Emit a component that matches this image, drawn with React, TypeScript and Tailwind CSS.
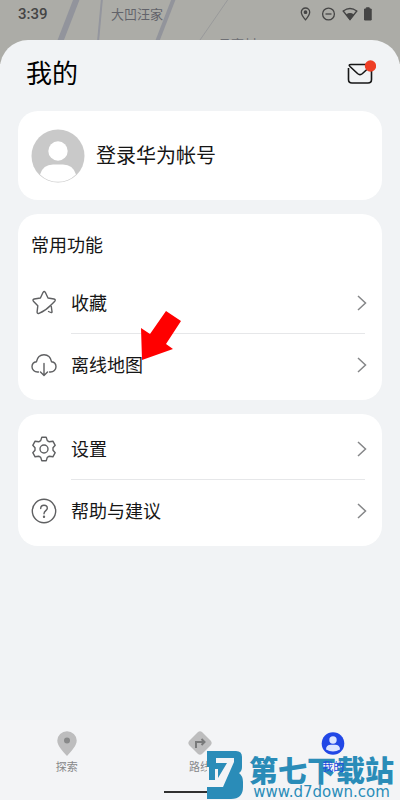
import React from "react";

const rowsCommon = [
  { label: "收藏", icon: "star" },
  { label: "离线地图", icon: "cloud" },
];

const rowsMore = [
  { label: "设置", icon: "gear" },
  { label: "帮助与建议", icon: "help" },
];

const RowIcon = ({ name }: { name: string }) => (
  <svg
    viewBox="0 0 26 26"
    className="size-[26px] shrink-0"
    fill="none"
    stroke="#5f6062"
    strokeWidth="1.4"
    strokeLinecap="round"
    strokeLinejoin="round"
  >
    {name === "star" && (
      <path d="M20.300 16.500L21 21.500Q21.300 23.500 17.500 21.500M20 15Q15 20.500 8 23.300Q6 24 6.100 21.800L6.800 15.800L2.400 11.200Q1.300 9.500 3.200 9L9.400 8L12.100 2.300Q13.200 0.800 14.300 2.300L17 8L23 9Q25 9.500 23.800 11.200L20 15" />
    )}
    {name === "cloud" && (
      <>
        <path d="M7.500 20H6.500C3.500 20 1 17.800 1 14.800C1 12 3 10 5.500 9.700C6.300 5.500 9.200 2.700 13 2.700C16.800 2.700 19.700 5.500 20.500 9.700C23 10 25 12 25 14.800C25 17.800 22.500 20 19.500 20H18.500" />
        <path d="M13 11.500V23M9.500 20L13 23.500L16.500 20" />
      </>
    )}
    {name === "gear" && (
      <>
        <path d="M10.800 1.200H15.200L16.300 4.600L18.300 5.800L21.900 5.200L24.200 9.300L22 11.800V14.200L24.200 16.700L21.900 20.800L18.300 20.200L16.300 21.400L15.200 24.800H10.800L9.700 21.400L7.700 20.200L4.100 20.800L1.800 16.700L4 14.200V11.800L1.800 9.300L4.100 5.200L7.700 5.800L9.700 4.600Z" />
        <circle cx="13" cy="13" r="4" />
      </>
    )}
    {name === "help" && (
      <>
        <circle cx="13" cy="13" r="11.700" />
        <path d="M9.700 10.500C9.700 8.500 11.100 7.200 13 7.200C15 7.200 16.300 8.500 16.300 10.200C16.300 12.600 13 12.700 13 15.700" />
        <circle cx="13" cy="18.700" r="0.500" fill="#5f6062" />
      </>
    )}
  </svg>
);

const MenuRow = ({ label, icon, divided }: { label: string; icon: string; divided: boolean }) => (
  <li className="flex">
    <button type="button" className="flex h-[62px] min-w-0 flex-1 items-center gap-3.5 text-left">
      <RowIcon name={icon} />
      <span
        className={`flex h-full flex-1 items-center justify-between border-b ${
          divided ? "border-[#e6e7e9]" : "border-transparent"
        }`}
      >
        <span className="pb-0.5 text-lg">{label}</span>
        <svg viewBox="0 0 10 16" className="-mr-0.5 h-4 w-2.5" fill="none" stroke="#858688" strokeWidth="1.5">
          <path d="M1 1L8.500 8L1 15" />
        </svg>
      </span>
    </button>
  </li>
);

const StatusBar = () => (
  <header className="relative h-16 overflow-hidden bg-[#acaca7] text-[#454545]">
    {/* Map roads behind the sheet */}
    <svg className="absolute inset-0 h-full w-full" fill="none">
      <path d="M77 -2L60 42" stroke="#92949c" strokeWidth="6" />
      <path d="M102 -2L98 42" stroke="#94969e" strokeWidth="2" />
      <path d="M174 -2L157 42" stroke="#92949b" strokeWidth="4" />
      <path d="M229 -2L200 40" stroke="#999a9b" strokeWidth="1" />
    </svg>
    <div className="relative flex h-7 items-center pl-[18px] pr-7">
      <span className="w-[93px] font-['Roboto'] text-[15px] font-medium">3:39</span>
      <span className="flex-1 text-[13px] text-[#62636a]">大凹汪家</span>
      <svg viewBox="0 0 72 14" className="h-3.5 w-[72px]" fill="none" stroke="#454545" strokeWidth="1.300">
        <path d="M5.500 12.800C3 9.800 1.300 7.500 1.300 5.200A4.200 4.200 0 0 1 9.700 5.200C9.700 7.500 8 9.800 5.500 12.800Z" />
        <circle cx="5.500" cy="5.200" r="1.200" fill="#454545" />
        <circle cx="28.500" cy="7" r="5.900" />
        <path d="M25.500 7H31.500" />
        <path d="M43.200 4Q50 -1 56.800 4L50 12.500Z" />
        <path d="M46.500 8Q50 5.500 53.500 8L50 12.500Z" fill="#454545" />
        <path d="M64.500 2H66.300V0.800H69.300V2H71.200V13H64.500Z" fill="#454545" stroke="#454545" strokeWidth="1" />
      </svg>
    </div>
    <span className="absolute left-[218px] top-9 text-[13px] leading-4 text-[#6e6f74]">月亮村</span>
  </header>
);

const Watermark = () => (
  <div className="pointer-events-none absolute bottom-0 right-1.5 flex items-end gap-1.5 text-[#2a8cb8]">
    <svg viewBox="0 0 36 50" className="h-[50px] w-9" fill="none">
      <path
        d="M0 1H29Q35 1 35 7V17Q35 21 32 23Q36 26 36 32V37Q36 49 24 49H0V37H9V30H2V19H0Z"
        fill="#2a8cb8"
      />
      {/* White seven cut out of the badge */}
      <path d="M9 8H27V12L16 37H0V33H8L20 13H9Z" fill="#f3f4f6" />
      <path d="M0 17H2V33H0ZM8 19H11V32H8Z" fill="#f3f4f6" />
    </svg>
    <div className="flex flex-col items-center">
      <span className="text-[29px] font-black leading-[30px]">第七下载站</span>
      <span className="font-['DejaVu_Sans'] text-[15px] leading-4">www.d7down.com</span>
    </div>
  </div>
);

export default function App() {
  return (
    <div className="relative flex min-h-screen flex-col bg-[#f1f3f5] font-['Noto_Sans_CJK_SC',sans-serif] text-[#161616]">
      <StatusBar />

      <main className="relative -mt-6 flex flex-1 flex-col gap-3.5 rounded-t-[28px] bg-[#f1f3f5] px-[18px]">
        <div className="flex h-[57px] items-center justify-between pl-2 pr-1.5 pt-1.5">
          <h1 className="text-[26px] leading-8 text-black">我的</h1>
          <button type="button" aria-label="消息">
            <svg viewBox="0 0 30 26" className="h-[26px] w-[30px]" fill="none" stroke="#161616" strokeWidth="1.600">
              <path d="M2.500 9V20.500Q2.500 24 6 24H22Q25.500 24 25.500 20.500V10M20 5.500H5Q2 5.500 4 7.500L11.500 14.500Q14 16.700 16.500 14.500L23 8.500" />
              <circle cx="24.500" cy="7" r="5.700" fill="#ee3e25" stroke="none" />
            </svg>
          </button>
        </div>

        <button type="button" className="flex h-[89px] items-center gap-[11px] rounded-[20px] bg-white px-[13px]">
          <svg viewBox="0 0 54 54" className="size-[54px]">
            <circle cx="27" cy="27" r="26.500" fill="#c9c9c9" />
            <circle cx="27" cy="22" r="9.700" fill="#fff" />
            <path d="M9 45.500Q12 35.500 22 35.500H32Q42 35.500 45 45.500A25.700 25.700 0 0 1 9 45.500Z" fill="#fff" />
          </svg>
          <span className="pb-0.5 text-xl">登录华为帐号</span>
        </button>

        <section className="rounded-[20px] bg-white pb-1 pl-[13px] pr-[17px] pt-[18px]">
          <h2 className="mb-4 text-lg leading-6">常用功能</h2>
          <ul>
            {rowsCommon.map((row, i) => (
              <MenuRow key={row.label} {...row} divided={i === 0} />
            ))}
          </ul>
        </section>

        <section className="rounded-[20px] bg-white py-1 pl-[13px] pr-[17px]">
          <ul>
            {rowsMore.map((row, i) => (
              <MenuRow key={row.label} {...row} divided={i === 0} />
            ))}
          </ul>
        </section>

        {/* Pointer at the offline map row */}
        <svg viewBox="0 0 42 52" className="absolute left-[140px] top-[270px] h-[52px] w-[42px]">
          <path d="M26 1L41 11L26 34L33 39L2 50L1 18L10 24Z" fill="#ff0000" />
        </svg>
      </main>

      <nav className="h-20 bg-[#f3f4f6] text-[11px] leading-4 text-[#868789]">
        <div className="grid grid-cols-3 pt-2.5">
          <button type="button" className="flex flex-col items-center gap-0.5">
            <svg viewBox="0 0 26 26" className="size-[26px]">
              <path d="M13 26C8 20.500 3.300 15.500 3.300 10.500A9.700 9.300 0 0 1 22.700 10.500C22.700 15.500 18 20.500 13 26Z" fill="#bdbdbe" />
              <circle cx="13" cy="10.500" r="3" fill="#88898a" />
            </svg>
            探索
          </button>
          <button type="button" className="flex flex-col items-center gap-0.5">
            <svg viewBox="0 0 26 26" className="size-[26px]">
              <path d="M11 2Q13 0.500 15 2L24 11Q25.500 13 24 15L15 24Q13 25.500 11 24L2 15Q0.500 13 2 11Z" fill="#bdbdbe" />
              <path d="M9 18V12H17M14.500 9L17.500 12L14.500 15" fill="none" stroke="#78797a" strokeWidth="2" />
            </svg>
            路线
          </button>
          <button type="button" className="relative z-10 flex flex-col items-center gap-0.5 text-[#1f47e0]">
            <svg viewBox="0 0 26 26" className="size-[26px]">
              <circle cx="13" cy="13.500" r="11.300" fill="#2147e6" />
              <circle cx="13" cy="10" r="3.700" fill="#dce4ff" />
              <path d="M6 19.500Q6 14.800 11 14.800H15Q20 14.800 20 19.500Q13 23.500 6 19.500Z" fill="#dce4ff" />
            </svg>
            我的
          </button>
        </div>
        <div className="mx-auto mt-[17px] h-0.5 w-[72px] bg-[#303030]" />
      </nav>
      <Watermark />
    </div>
  );
}
